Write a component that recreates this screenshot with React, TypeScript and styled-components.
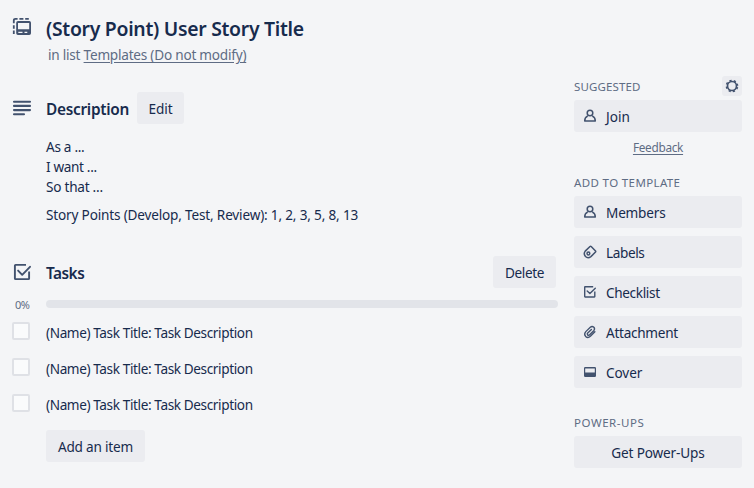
import React from 'react';
import styled, { createGlobalStyle } from 'styled-components';

const Global = createGlobalStyle`
  *, *::before, *::after { box-sizing: border-box; }
  body {
    margin: 0;
    background: #f4f5f7;
    color: #172b4d;
    font: 400 13.6px/20px 'Segoe UI', 'Noto Sans', sans-serif;
  }
  h2, h3, h4, p { margin: 0; }
`;

const Window = styled.div`
  display: flex;
  justify-content: space-between;
  width: 754px;
  height: 488px;
  padding: 0 12px;
  overflow: hidden;
  white-space: nowrap;
`;

const Main = styled.main`
  width: 546px;
`;

const Sidebar = styled.aside`
  width: 168px;
  padding-top: 76px;
`;

const Header = styled.header`
  display: grid;
  grid-template-columns: 34px 1fr;
  padding-top: 17px;
  height: 92px;
  align-content: start;
`;

const HeaderIcon = styled.span`
  display: flex;
  height: 24px;
`;

const Title = styled.h2`
  font-size: 19.4px;
  font-weight: 600;
  line-height: 24px;
  letter-spacing: -0.29px;
`;

const ListLine = styled.p`
  grid-column: 2;
  margin: 4px 0 0 2px;
  color: #5e6c84;
  letter-spacing: -0.23px;
`;

const Link = styled.a`
  color: inherit;
  text-decoration: underline;
  text-underline-offset: 2px;
`;

const SectionHead = styled.div`
  display: flex;
  align-items: center;
  height: 32px;
`;

const IconSlot = styled.span`
  display: flex;
  width: 34px;
`;

const SectionTitle = styled.h3<{ $width: number; $spacing: number }>`
  width: ${(p) => p.$width}px;
  padding-top: 3px;
  font-size: 15.4px;
  font-weight: 600;
  line-height: 20px;
  letter-spacing: ${(p) => p.$spacing}px;
`;

const Button = styled.button<{ $width: number; $spacing: number }>`
  width: ${(p) => p.$width}px;
  height: 32px;
  padding: 1px 0 0;
  border: 0;
  border-radius: 3px;
  background: #ebecf0;
  color: #172b4d;
  font: inherit;
  line-height: 20px;
  letter-spacing: ${(p) => p.$spacing}px;
  text-align: center;
`;

const Description = styled.div`
  padding: 13px 0 0 34px;
  height: 132px;
`;

const Line = styled.p<{ $gap?: number; $spacing: number }>`
  margin-top: ${(p) => p.$gap ?? 0}px;
  letter-spacing: ${(p) => p.$spacing}px;
`;

const Progress = styled.div`
  display: flex;
  align-items: center;
  height: 32px;
`;

const Percent = styled.span`
  width: 34px;
  padding: 1px 0 0 3px;
  color: #5e6c84;
  font-size: 11px;
  line-height: 10px;
  letter-spacing: -0.6px;
`;

const Bar = styled.div`
  width: 512px;
  height: 8px;
  border-radius: 4px;
  background: #e2e4e9;
`;

const Task = styled.div`
  display: flex;
  align-items: flex-start;
  height: 36px;
  padding-top: 2px;
`;

const CheckBox = styled.span`
  width: 18px;
  height: 18px;
  margin-right: 16px;
  border: 2px solid #dfe1e6;
  border-radius: 2px;
  background: #fafbfc;
`;

const TaskText = styled.span`
  padding-top: 1px;
  letter-spacing: -0.39px;
`;

const AddRow = styled.div`
  padding: 2px 0 0 34px;
`;

const SideHead = styled.div`
  display: flex;
  justify-content: space-between;
  align-items: center;
  height: 20px;
  margin-bottom: 4px;
`;

const SideTitle = styled.h4<{ $spacing: number }>`
  padding-top: 2px;
  color: #5e6c84;
  font-size: 11.5px;
  font-weight: 400;
  line-height: 20px;
  letter-spacing: ${(p) => p.$spacing}px;
  text-transform: uppercase;
`;

const Gear = styled.span`
  display: grid;
  place-items: center;
  width: 20px;
  height: 20px;
  border-radius: 3px;
  background: #ebecf0;
`;

const SideButton = styled.div`
  display: flex;
  align-items: center;
  gap: 8px;
  height: 32px;
  margin-bottom: 8px;
  padding-left: 8px;
  border-radius: 3px;
  background: #ebecf0;
`;

const SideLabel = styled.span<{ $spacing: number }>`
  padding-top: 1px;
  letter-spacing: ${(p) => p.$spacing}px;
`;

const Feedback = styled.p`
  height: 32px;
  color: #5e6c84;
  font-size: 11.8px;
  line-height: 14px;
  letter-spacing: -0.3px;
  text-align: center;
`;

const Spacer = styled.div`
  height: 16px;
`;

const INK = '#42526e';

const TemplateIcon = () => (
  <svg width="20" height="20" viewBox="0 0 20 20" fill="none">
    <path
      d="M1.8 17V13.6M1.8 11.8V8.2M1.8 6.2V3.4Q1.8 1.9 3.4 1.9H5.6M7.4 1.9H11.4M13.2 1.9H16.8"
      stroke={INK}
      strokeWidth="1.8"
    />
    <path
      d="M6 4H17.2Q19 4 19 5.8V16.2Q19 18 17.2 18H6Q4.2 18 4.2 16.2V5.8Q4.2 4 6 4ZM6 5.9V12.2H17.2V5.9ZM6.3 14.8V16H10.5V14.8ZM12.5 14.8V16H15.3V14.8Z"
      fill={INK}
      fillRule="evenodd"
    />
  </svg>
);

const TextIcon = () => (
  <svg width="20" height="20" viewBox="0 0 20 20" stroke={INK} strokeWidth="2.1" strokeLinecap="round">
    <path d="M2 3.8H18M2 7.9H18M2 12.1H18M2 16.2H12" />
  </svg>
);

const CheckIcon = ({ size }: { size: number }) => (
  <svg width={size} height={size} viewBox="0 0 20 20" fill="none" stroke={INK} strokeWidth="1.9" strokeLinejoin="round">
    <path d="M14 2.9H3.6Q2.9 2.9 2.9 3.6V16.4Q2.9 17.1 3.6 17.1H16.4Q17.1 17.1 17.1 16.4V9.6" />
    <path d="M6.1 8.6L10.2 12.8L18 4.8" strokeLinecap="round" />
  </svg>
);

const SmallCheckIcon = () => (
  <svg width="16" height="16" viewBox="0 0 16 16" fill="none" stroke={INK} strokeWidth="1.4" strokeLinejoin="round">
    <path d="M11.2 2.7H3.1Q2.7 2.7 2.7 3.1V12.6Q2.7 13 3.1 13H12.4Q12.8 13 12.8 12.6V7.6" />
    <path d="M5.2 6.9L7.9 9.5L13.3 4.2" strokeLinecap="round" />
  </svg>
);

const PersonIcon = () => (
  <svg width="16" height="16" viewBox="0 0 16 16" fill="none" stroke={INK} strokeWidth="1.5">
    <circle cx="8" cy="5" r="2.8" />
    <path d="M5.7 8Q2.7 9.3 2.7 12.9H13.3Q13.3 9.3 10.3 8" strokeLinejoin="round" />
  </svg>
);

const LabelIcon = () => (
  <svg width="16" height="16" viewBox="0 0 16 16" fill="none" stroke={INK} strokeWidth="1.5">
    <path d="M8 2.5Q8.6 2 9.2 2.5L13.5 6.9Q14 7.5 13.5 8.1L8.9 12.6Q5.9 14.8 3.5 12.5Q1.2 9.6 3.2 7.1Z" />
    <circle cx="6.4" cy="9.5" r="1.4" />
  </svg>
);

const ClipIcon = () => (
  <svg width="16" height="16" viewBox="0 0 16 16" fill="none" stroke={INK} strokeWidth="1.35" strokeLinecap="round">
    <path d="M12.9 7.8L8.4 12.3Q5.9 14.5 3.6 12.4Q1.6 10 3.8 7.6L8.3 3.2Q10.1 1.7 11.9 3.2Q13.3 4.9 11.7 6.7L7.4 10.9Q6.5 11.7 5.6 10.9Q4.8 10 5.7 9.1L9.4 5.4" />
  </svg>
);

const CoverIcon = () => (
  <svg width="16" height="16" viewBox="0 0 16 16">
    <path
      d="M3.2 3H12.8Q14 3 14 4.2V11.8Q14 13 12.8 13H3.2Q2 13 2 11.8V4.2Q2 3 3.2 3ZM3.2 4.6V8.6H12.8V4.6Z"
      fill={INK}
      fillRule="evenodd"
    />
  </svg>
);

const GearIcon = () => (
  <svg width="16" height="16" viewBox="0 0 16 16" fill="none" stroke={INK}>
    <circle cx="8" cy="8" r="4.5" strokeWidth="1.7" />
    <circle cx="8" cy="8" r="5.6" strokeWidth="1.5" strokeDasharray="2.2 2.2" strokeDashoffset="-1.1" />
  </svg>
);

const TASKS = ['(Name) Task Title: Task Description', '(Name) Task Title: Task Description', '(Name) Task Title: Task Description'];

const ACTIONS = [
  { label: 'Members', spacing: -0.2, icon: <PersonIcon /> },
  { label: 'Labels', spacing: -0.4, icon: <LabelIcon /> },
  { label: 'Checklist', spacing: -0.35, icon: <SmallCheckIcon /> },
  { label: 'Attachment', spacing: -0.28, icon: <ClipIcon /> },
  { label: 'Cover', spacing: -0.1, icon: <CoverIcon /> },
];

export default function App() {
  return (
    <Window>
      <Global />
      <Main>
        <Header>
          <HeaderIcon>
            <TemplateIcon />
          </HeaderIcon>
          <Title>(Story Point) User Story Title</Title>
          <ListLine>
            in list <Link>Templates (Do not modify)</Link>
          </ListLine>
        </Header>

        <SectionHead>
          <IconSlot>
            <TextIcon />
          </IconSlot>
          <SectionTitle $width={91} $spacing={-0.28}>
            Description
          </SectionTitle>
          <Button $width={47} $spacing={-0.1}>
            Edit
          </Button>
        </SectionHead>
        <Description>
          <Line $spacing={-0.3}>As a ...</Line>
          <Line $spacing={-0.35}>I want ...</Line>
          <Line $spacing={-0.25}>So that ...</Line>
          <Line $gap={8} $spacing={-0.18}>
            Story Points (Develop, Test, Review): 1, 2, 3, 5, 8, 13
          </Line>
        </Description>

        <SectionHead>
          <IconSlot>
            <CheckIcon size={20} />
          </IconSlot>
          <SectionTitle $width={447} $spacing={-0.5}>
            Tasks
          </SectionTitle>
          <Button $width={63} $spacing={-0.4}>
            Delete
          </Button>
        </SectionHead>
        <Progress>
          <Percent>0%</Percent>
          <Bar />
        </Progress>
        {TASKS.map((task, i) => (
          <Task key={i}>
            <CheckBox />
            <TaskText>{task}</TaskText>
          </Task>
        ))}
        <AddRow>
          <Button $width={99} $spacing={-0.2}>
            Add an item
          </Button>
        </AddRow>
      </Main>

      <Sidebar>
        <SideHead>
          <SideTitle $spacing={0.12}>Suggested</SideTitle>
          <Gear>
            <GearIcon />
          </Gear>
        </SideHead>
        <SideButton>
          <PersonIcon />
          <SideLabel $spacing={0}>Join</SideLabel>
        </SideButton>
        <Feedback>
          <Link>Feedback</Link>
        </Feedback>
        <SideHead>
          <SideTitle $spacing={0.37}>Add to template</SideTitle>
        </SideHead>
        {ACTIONS.map((a) => (
          <SideButton key={a.label}>
            {a.icon}
            <SideLabel $spacing={a.spacing}>{a.label}</SideLabel>
          </SideButton>
        ))}
        <Spacer />
        <SideHead>
          <SideTitle $spacing={0.55}>Power-Ups</SideTitle>
        </SideHead>
        <Button $width={168} $spacing={-0.16}>
          Get Power-Ups
        </Button>
      </Sidebar>
    </Window>
  );
}
